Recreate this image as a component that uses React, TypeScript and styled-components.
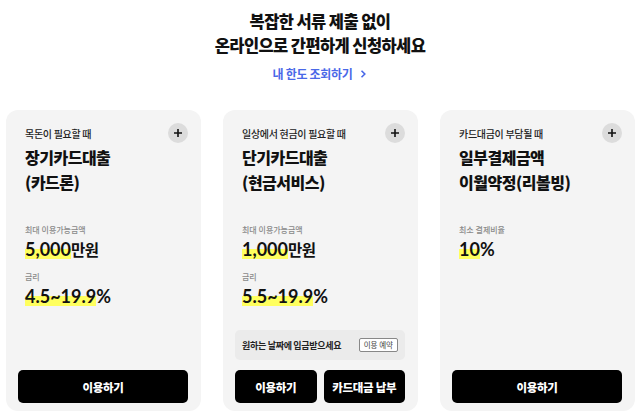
import React from "react";
import styled, { createGlobalStyle } from "styled-components";

const GlobalStyle = createGlobalStyle`
  body {
    margin: 0;
    background: #fff;
    font-family: "Noto Sans CJK KR", "Noto Sans", sans-serif;
    color: #111;
  }
`;

type Stat = { label: string; value: string; unit?: string };

type Product = {
  sub: string;
  title: string[];
  stats: Stat[];
  reserve?: boolean;
  buttons: string[];
};

const products: Product[] = [
  {
    sub: "목돈이 필요할 때",
    title: ["장기카드대출", "(카드론)"],
    stats: [
      { label: "최대 이용가능금액", value: "5,000", unit: "만원" },
      { label: "금리", value: "4.5~19.9", unit: "%" },
    ],
    buttons: ["이용하기"],
  },
  {
    sub: "일상에서 현금이 필요할 때",
    title: ["단기카드대출", "(현금서비스)"],
    stats: [
      { label: "최대 이용가능금액", value: "1,000", unit: "만원" },
      { label: "금리", value: "5.5~19.9", unit: "%" },
    ],
    reserve: true,
    buttons: ["이용하기", "카드대금 납부"],
  },
  {
    sub: "카드대금이 부담될 때",
    title: ["일부결제금액", "이월약정(리볼빙)"],
    stats: [{ label: "최소 결제비율", value: "10", unit: "%" }],
    buttons: ["이용하기"],
  },
];

const App: React.FC = () => {
  return (
    <>
      <GlobalStyle />
      <Page>
        <Header>
          <Heading>
            복잡한 서류 제출 없이
            <br />
            온라인으로 간편하게 신청하세요
          </Heading>
          <LimitLink href="#">
            내 한도 조회하기
            <svg width="10" height="10" viewBox="0 0 10 10">
              <path d="M3.5 1.8 L6.8 5 L3.5 8.2" fill="none" stroke="#4a68e8" strokeWidth="1.6" />
            </svg>
          </LimitLink>
        </Header>

        <CardRow>
          {products.map((p) => (
            <Card key={p.sub}>
              <CardHead>
                <Sub>{p.sub}</Sub>
                <PlusButton aria-label="더보기">
                  <svg width="10" height="10" viewBox="0 0 10 10">
                    <path d="M5 1 V9 M1 5 H9" stroke="#111" strokeWidth="1.6" />
                  </svg>
                </PlusButton>
              </CardHead>
              <Title>
                {p.title[0]}
                <br />
                {p.title[1]}
              </Title>
              <Stats>
                {p.stats.map((s) => (
                  <StatItem key={s.label}>
                    <StatLabel>{s.label}</StatLabel>
                    <StatValue>
                      <Mark>{s.value}</Mark>
                      <Unit $pct={s.unit === "%"}>{s.unit}</Unit>
                    </StatValue>
                  </StatItem>
                ))}
              </Stats>
              <Bottom>
                {p.reserve && (
                  <Notice>
                    <span>원하는 날짜에 입금받으세요</span>
                    <ReserveButton>이용 예약</ReserveButton>
                  </Notice>
                )}
                <ButtonRow>
                  {p.buttons.map((b) => (
                    <ActionButton key={b}>{b}</ActionButton>
                  ))}
                </ButtonRow>
              </Bottom>
            </Card>
          ))}
        </CardRow>
      </Page>
    </>
  );
};

const Page = styled.div`
  width: 640px;
  height: 413px;
  overflow: hidden;
`;

const Header = styled.div`
  display: flex;
  flex-direction: column;
  align-items: center;
  padding-top: 9px;
`;

const Heading = styled.h1`
  margin: 0;
  font-size: 16.5px;
  line-height: 24px;
  font-weight: 800;
  letter-spacing: -0.6px;
  text-align: center;
  color: #111;
`;

const LimitLink = styled.a`
  margin-top: 8px;
  display: flex;
  align-items: center;
  gap: 5px;
  font-size: 12px;
  line-height: 18px;
  font-weight: 700;
  color: #4a68e8;
  text-decoration: none;
  letter-spacing: -0.3px;
`;

const CardRow = styled.div`
  display: grid;
  grid-template-columns: repeat(3, 195px);
  gap: 22px;
  padding-left: 6px;
  margin-top: 27px;
`;

const Card = styled.div`
  height: 301px;
  box-sizing: border-box;
  background: #f4f4f4;
  border-radius: 12px;
  padding: 13px 13px 8px 12px;
  display: flex;
  flex-direction: column;
`;

const CardHead = styled.div`
  display: flex;
  align-items: center;
  justify-content: space-between;
  height: 20px;
  padding-left: 7px;
`;

const Sub = styled.span`
  font-size: 10px;
  font-weight: 500;
  letter-spacing: -0.3px;
  color: #222;
`;

const PlusButton = styled.button`
  width: 20px;
  height: 20px;
  border-radius: 50%;
  border: none;
  padding: 0;
  background: #dcdcdc;
  display: flex;
  align-items: center;
  justify-content: center;
`;

const Title = styled.div`
  margin-top: 2px;
  padding-left: 7px;
  font-size: 16px;
  line-height: 25px;
  font-weight: 800;
  letter-spacing: -0.5px;
  color: #111;
`;

const Stats = styled.div`
  margin-top: 29px;
  padding-left: 7px;
  display: flex;
  flex-direction: column;
  gap: 10px;
`;

const StatItem = styled.div`
  display: flex;
  flex-direction: column;
  gap: 1px;
`;

const StatLabel = styled.span`
  font-size: 8px;
  line-height: 12px;
  font-weight: 500;
  color: #8a8a8a;
`;

const StatValue = styled.div`
  display: flex;
  align-items: baseline;
  line-height: 24px;
  color: #111;
`;

const Mark = styled.span`
  font-family: Lato, "Noto Sans", sans-serif;
  font-size: 18px;
  font-weight: 700;
  background: linear-gradient(transparent 50%, #ffff5e 50%, #ffff5e 92%, transparent 92%);
`;

const Unit = styled.span<{ $pct: boolean }>`
  font-family: ${(p) => (p.$pct ? "Lato, " : "")} "Noto Sans CJK KR", sans-serif;
  font-size: ${(p) => (p.$pct ? "18px" : "15.5px")};
  font-weight: 700;
  letter-spacing: -0.5px;
`;

const Bottom = styled.div`
  margin-top: auto;
  display: flex;
  flex-direction: column;
  gap: 10px;
`;

const Notice = styled.div`
  height: 30px;
  box-sizing: border-box;
  background: #ebebeb;
  border-radius: 5px;
  padding: 0 7px;
  display: flex;
  align-items: center;
  justify-content: space-between;
  font-size: 9px;
  font-weight: 700;
  letter-spacing: -0.3px;
  color: #222;
`;

const ReserveButton = styled.button`
  height: 14px;
  padding: 0 4px;
  border: 1px solid #888;
  border-radius: 2px;
  background: #fff;
  font-family: "Noto Sans CJK KR", sans-serif;
  font-size: 7.5px;
  line-height: 12px;
  color: #444;
`;

const ButtonRow = styled.div`
  display: flex;
  gap: 7px;
`;

const ActionButton = styled.button`
  flex: 1;
  height: 33px;
  border: none;
  border-radius: 5px;
  background: #000;
  color: #fff;
  font-family: "Noto Sans CJK KR", sans-serif;
  font-size: 11.5px;
  font-weight: 800;
  letter-spacing: -0.3px;
`;

export default App;
